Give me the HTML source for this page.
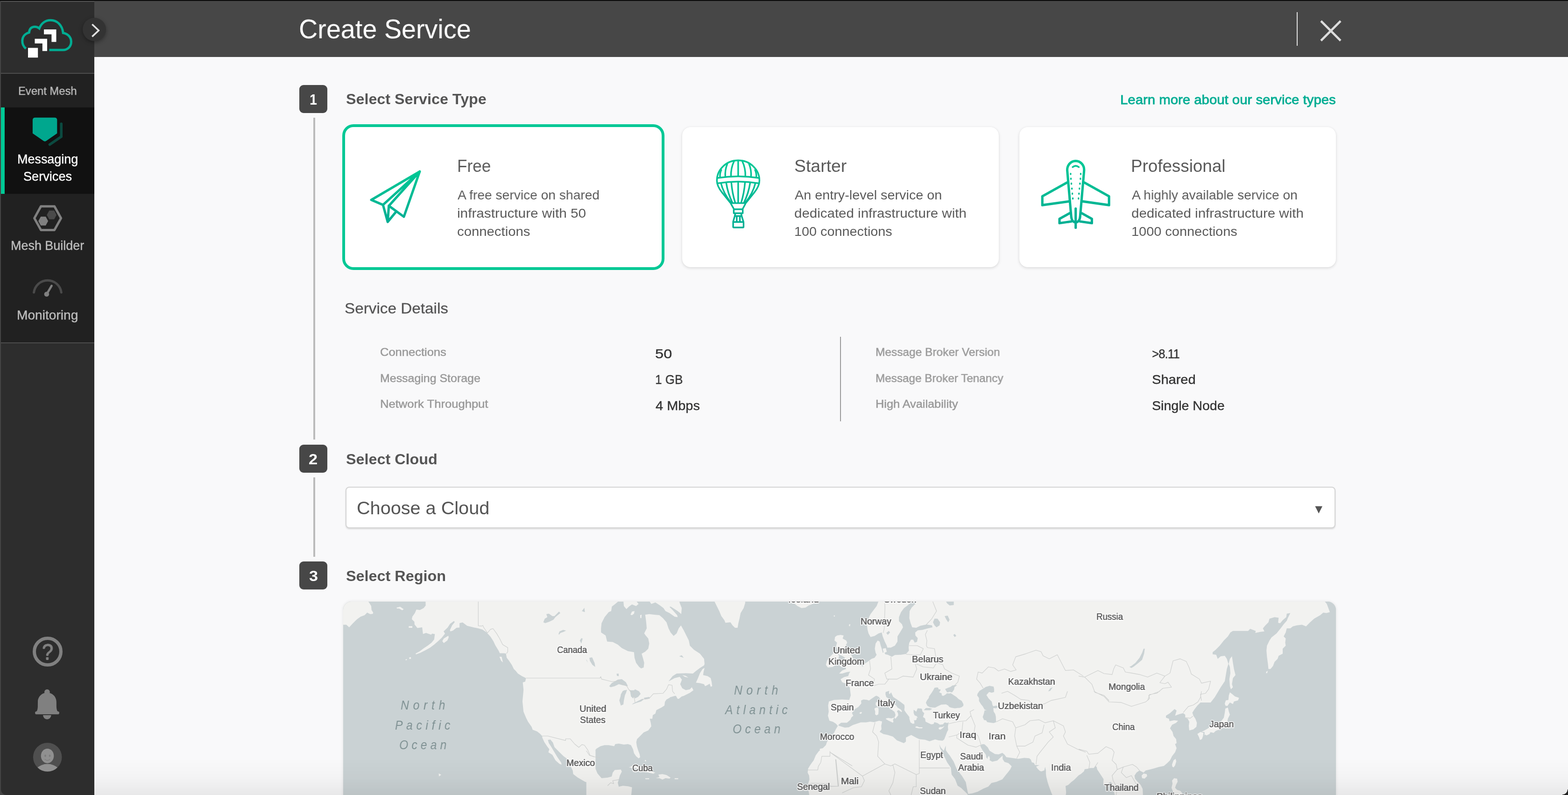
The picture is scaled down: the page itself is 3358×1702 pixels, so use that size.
<!DOCTYPE html>
<html lang="en">
<head>
<meta charset="utf-8">
<title>Create Service</title>
<style>
*{box-sizing:border-box;margin:0;padding:0}
html,body{width:3358px;height:1702px;overflow:hidden;background:#f9f9fa}
body{font-family:"Liberation Sans",sans-serif;position:relative}
#app{position:absolute;left:0;top:0;width:3358px;height:1702px;overflow:hidden;background:#f9f9fa}
.a{position:absolute}
.t{position:absolute;white-space:nowrap;line-height:1;will-change:transform;transform-origin:0 0}
svg{position:absolute;overflow:visible}
.badge{position:absolute;width:60px;height:60px;border-radius:9px;background:#474747}
.card{position:absolute;top:272px;width:678px;height:300px;background:#fff;border-radius:18px;box-shadow:0 2px 6px rgba(0,0,0,.13),0 0 2px rgba(0,0,0,.06)}
.card.sel{box-shadow:0 0 0 6px #00c895}
.ml{color:#626262;transform-origin:0 0;text-shadow:0.35px 0 0 #626262,-0.35px 0 0 #626262,0 0 2px #fff,0 0 2px #fff,0 0 3px #fff,0 0 3px #fff,1.5px 1.5px 1px #fff,-1.5px -1.5px 1px #fff,1.5px -1.5px 1px #fff,-1.5px 1.5px 1px #fff}
.mo{color:#7f9193;font-style:italic;transform-origin:0 0}
.vline{position:absolute;left:671px;width:4px;background:#bbb}
</style>
</head>
<body>
<div id="app">
<div class="a" style="left:0;top:0;width:202px;height:1702px;background:#444"></div>
<header class="a" style="left:202px;top:2px;width:3156px;height:120px;background:#474747"></header>
<nav class="a" style="left:2px;top:2px;width:200px;height:1700px;background:#2d2d2d;border-bottom-left-radius:12px;overflow:hidden">
<div class="a" style="left:0;top:0;width:200px;height:2px;background:#555"></div>
<div class="a" style="left:0;top:154px;width:200px;height:2px;background:#4d4d4d"></div>
<div class="a" style="left:0;top:156px;width:200px;height:575px;background:#212121"></div>
<div class="a" style="left:0;top:228px;width:200px;height:185px;background:#111"></div>
<div class="a" style="left:0;top:228px;width:8px;height:185px;background:#00c895"></div>
<div class="a" style="left:0;top:731px;width:200px;height:2px;background:#4d4d4d"></div>
</nav>
<div class="a" style="left:0;top:0;width:3358px;height:2px;background:#0a0a0a"></div>
<svg style="left:0;top:0" width="210" height="140" viewBox="0 0 210 140">
<path d="M55.5 104 C48 98 47.5 91 47.8 86 C48.5 77 55 71.5 62.3 69.6 C63 61 68 57.2 74.5 57.2 C78.5 57.2 81.5 58.5 84.2 60.8 C88.5 50 97 43.3 108.3 43.3 C122.5 43.3 133.5 54 135.2 70.5 C145 72 152.4 79.5 152.4 89.5 C152.4 99.5 145 107 135 107 L105.5 107" fill="none" stroke="#00ad93" stroke-width="5"/>
<rect x="60" y="102.5" width="21.2" height="20.8" fill="#fff"/>
<path d="M74.5 83 H101 V109.3 H90.8 V93 H74.5 Z" fill="#fff"/>
<path d="M94.1 63.1 H120.5 V89.7 H110.4 V73.4 H94.1 Z" fill="#fff"/>
</svg>
<div class="a" style="left:177px;top:38px;width:50px;height:50px;border-radius:50%;background:#333;box-shadow:0 3px 8px rgba(0,0,0,.35)"></div>
<svg style="left:177px;top:38px" width="50" height="50" viewBox="177 38 50 50"><path d="M197.3 52 L211.3 65.2 L197.3 78.4" fill="none" stroke="#e2e2e2" stroke-width="3.6"/></svg>
<div class="t " style="left:38.85px;top:182.50px;font-size:24.56px;color:#bdbdbd;transform:scaleX(0.9691);-webkit-text-stroke:0.4px #bdbdbd;">Event Mesh</div>
<div class="t " style="left:36.79px;top:328.16px;font-size:26.74px;color:#fafafa;transform:scaleX(1.0078);-webkit-text-stroke:0.4px #fafafa;">Messaging</div>
<div class="t " style="left:49.97px;top:364.56px;font-size:26.74px;color:#fafafa;transform:scaleX(1.0153);-webkit-text-stroke:0.4px #fafafa;">Services</div>
<div class="t " style="left:23.19px;top:513.26px;font-size:26.74px;color:#bdbdbd;transform:scaleX(1.0076);-webkit-text-stroke:0.4px #bdbdbd;">Mesh Builder</div>
<div class="t " style="left:35.89px;top:662.36px;font-size:26.74px;color:#bdbdbd;transform:scaleX(1.0517);-webkit-text-stroke:0.4px #bdbdbd;">Monitoring</div>
<svg style="left:0;top:240px" width="202" height="80" viewBox="0 240 202 80">
<path d="M131.2 265 V292.5 L106.5 309.5" fill="none" stroke="#0b4a40" stroke-width="5.6" stroke-linecap="round" stroke-linejoin="miter"/>
<path d="M75.4 251.7 H116.8 Q122.3 251.7 122.3 257.2 V285.5 L99.2 301.6 Q96.1 303.7 93 301.6 L69.9 285.5 V257.2 Q69.9 251.7 75.4 251.7 Z" fill="#00a78e"/>
</svg>
<svg style="left:0;top:430px" width="202" height="80" viewBox="0 430 202 80">
<path d="M73.6 467.1 L87.6 441.8 H116.6 L130.7 467.1 L116.6 492.4 H87.6 Z" fill="none" stroke="#808080" stroke-width="5" stroke-linejoin="round"/>
<path d="M82.1 473.2 L87.3 463.7 H97.9 L103.1 473.2 L97.9 482.8 H87.3 Z" fill="#808080"/>
<path d="M100.2 460.2 L105.4 450.8 H116 L121.1 460.2 L116 469.5 H105.4 Z" fill="#4a4a4a"/>
</svg>
<svg style="left:0;top:590px" width="202" height="60" viewBox="0 590 202 60">
<path d="M72.6 626 A29.6 29.6 0 0 1 131.3 626" fill="none" stroke="#4a4a4a" stroke-width="5" stroke-linecap="round"/>
<path d="M100 629.6 L110.6 611.8" fill="none" stroke="#808080" stroke-width="4.6" stroke-linecap="round"/>
<circle cx="99.9" cy="629.8" r="5.3" fill="#808080"/>
</svg>
<div class="a" style="left:69.9px;top:1363px;width:64px;height:64px;border-radius:50%;border:7px solid #808080"></div>
<div class="t " style="left:90.43px;top:1371.59px;font-size:47.97px;color:#808080;transform:scaleX(0.9000);text-shadow:0.7px 0 0 #808080,-0.7px 0 0 #808080,0 0.5px 0 #808080;">?</div>
<svg style="left:0;top:1470px" width="202" height="80" viewBox="0 1470 202 80">
<circle cx="100.9" cy="1481.7" r="5.9" fill="#808080"/>
<path d="M76.6 1524.5 C79.3 1523 80.6 1519.5 80.9 1513 L81 1502.5 C81 1491.5 89.5 1482.9 100.9 1482.9 C112.3 1482.9 120.8 1491.5 120.8 1502.5 L120.9 1513 C121.2 1519.5 122.5 1523 125.4 1524.5 Z" fill="#808080"/>
<rect x="75.1" y="1523" width="51.8" height="6.3" rx="3.1" fill="#808080"/>
<path d="M92.1 1531 H109.6 A8.75 8.9 0 0 1 92.1 1531 Z" fill="#808080"/>
</svg>
<svg style="left:0;top:1580px" width="202" height="80" viewBox="0 1580 202 80">
<defs><clipPath id="avc"><circle cx="101.7" cy="1621" r="30.8"/></clipPath></defs>
<circle cx="101.7" cy="1621" r="30.8" fill="#4f4f4f"/>
<g clip-path="url(#avc)"><ellipse cx="101.7" cy="1667" rx="33" ry="31.5" fill="#909090"/></g>
<ellipse cx="101.5" cy="1618.3" rx="13.8" ry="15.6" fill="#909090"/>
<ellipse cx="97" cy="1618" rx="1.9" ry="2.4" fill="#7c7c7c"/>
<ellipse cx="106.6" cy="1618" rx="1.9" ry="2.4" fill="#7c7c7c"/>
<path d="M96 1625.5 Q101.4 1630.5 107 1625.5" fill="none" stroke="#7c7c7c" stroke-width="1.3" stroke-linecap="round"/>
</svg>
<div class="t " style="left:640.27px;top:34.63px;font-size:56.54px;color:#ffffff;transform:scaleX(0.9860);">Create Service</div>
<div class="a" style="left:2777px;top:26px;width:2px;height:72px;background:#e0e0e0"></div>
<svg style="left:2820px;top:36px" width="60" height="60" viewBox="2820 36 60 60"><path d="M2829 45 L2871 87 M2871 45 L2829 87" fill="none" stroke="#dcdcdc" stroke-width="4.6"/></svg>
<div class="vline" style="top:252px;height:689px"></div>
<div class="vline" style="top:1022px;height:170px"></div>
<div class="badge" style="left:641px;top:182px"></div>
<div class="badge" style="left:641px;top:952px"></div>
<div class="badge" style="left:641px;top:1202px"></div>
<div class="t " style="left:663.20px;top:198.47px;font-size:31.69px;color:#fff;transform:scaleX(0.9000);font-weight:bold;">1</div>
<div class="t " style="left:661.31px;top:968.47px;font-size:31.69px;color:#fff;transform:scaleX(1.0816);font-weight:bold;">2</div>
<div class="t " style="left:661.72px;top:1218.47px;font-size:31.69px;color:#fff;transform:scaleX(1.0794);font-weight:bold;">3</div>
<div class="t " style="left:740.97px;top:196.48px;font-size:32.27px;color:#555;transform:scaleX(1.0000);font-weight:bold;">Select Service Type</div>
<div class="t " style="left:740.67px;top:966.58px;font-size:32.27px;color:#555;transform:scaleX(1.0017);font-weight:bold;">Select Cloud</div>
<div class="t " style="left:740.67px;top:1216.78px;font-size:32.27px;color:#555;transform:scaleX(1.0026);font-weight:bold;">Select Region</div>
<div class="t " style="left:2399.19px;top:198.83px;font-size:28.20px;color:#00ad93;transform:scaleX(1.0413);-webkit-text-stroke:0.8px #00ad93;">Learn more about our service types</div>
<div class="card sel" style="left:739px;border-radius:18px"></div>
<div class="card" style="left:1461px"></div>
<div class="card" style="left:2183px"></div>
<div class="t " style="left:978.52px;top:337.76px;font-size:36.77px;color:#5a5a5a;transform:scaleX(0.9540);">Free</div>
<div class="t " style="left:980.04px;top:403.08px;font-size:28.49px;color:#5a5a5a;transform:scaleX(0.9896);">A free service on shared</div>
<div class="t " style="left:978.51px;top:441.88px;font-size:28.49px;color:#5a5a5a;transform:scaleX(1.0444);">infrastructure with 50</div>
<div class="t " style="left:978.86px;top:480.98px;font-size:28.49px;color:#5a5a5a;transform:scaleX(1.0287);">connections</div>
<div class="t " style="left:1700.80px;top:337.76px;font-size:36.77px;color:#5a5a5a;transform:scaleX(1.0178);">Starter</div>
<div class="t " style="left:1701.94px;top:403.08px;font-size:28.49px;color:#5a5a5a;transform:scaleX(1.0112);">An entry-level service on</div>
<div class="t " style="left:1701.06px;top:441.88px;font-size:28.49px;color:#5a5a5a;transform:scaleX(1.0353);">dedicated infrastructure with</div>
<div class="t " style="left:1700.81px;top:480.98px;font-size:28.49px;color:#5a5a5a;transform:scaleX(1.0108);">100 connections</div>
<div class="t " style="left:2421.79px;top:337.76px;font-size:36.77px;color:#5a5a5a;transform:scaleX(0.9991);">Professional</div>
<div class="t " style="left:2423.94px;top:403.08px;font-size:28.49px;color:#5a5a5a;transform:scaleX(0.9914);">A highly available service on</div>
<div class="t " style="left:2423.06px;top:441.88px;font-size:28.49px;color:#5a5a5a;transform:scaleX(1.0353);">dedicated infrastructure with</div>
<div class="t " style="left:2422.80px;top:480.98px;font-size:28.49px;color:#5a5a5a;transform:scaleX(1.0153);">1000 connections</div>
<svg style="left:770px;top:340px" width="160" height="160" viewBox="0 0 1306 1306"><defs><linearGradient id="g1" gradientUnits="userSpaceOnUse" x1="0" y1="200" x2="0" y2="1120"><stop offset="0" stop-color="#00c895"/><stop offset="1" stop-color="#00ad93"/></linearGradient></defs><g fill="none" stroke="url(#g1)" stroke-width="42" stroke-linejoin="round" stroke-linecap="round"><path d="M1052 222 L205 718 L410 805 L1052 222 L775 1012 L512 822 L1052 222"/><path d="M410 805 L492 1102 L512 822 M492 1102 L628 938"/></g></svg>
<svg style="left:1500px;top:335px" width="160" height="160" viewBox="0 0 1306 1306"><defs><linearGradient id="g2" gradientUnits="userSpaceOnUse" x1="0" y1="60" x2="0" y2="1250"><stop offset="0" stop-color="#00c895"/><stop offset="1" stop-color="#00ad93"/></linearGradient></defs><g fill="none" stroke="url(#g2)" stroke-width="28" stroke-linejoin="round" stroke-linecap="round"><path d="M528 815 L375 625 C320 555 288 490 288 420 C288 225 455 68 660 68 C865 68 1032 225 1032 420 C1032 490 1000 555 945 625 L792 815 Z"/><path d="M296 376 Q660 318 1024 376 M300 468 Q660 410 1020 468"/><path d="M660 70 V345 M590 80 Q530 200 534 350 M470 130 Q425 240 436 358 M365 235 Q335 300 344 368 M730 80 Q790 200 786 350 M850 130 Q895 240 884 358 M955 235 Q985 300 976 368"/><path d="M660 442 V810 M540 448 Q555 640 608 808 M450 456 Q480 650 560 808 M360 468 Q400 640 535 808 M780 448 Q765 640 712 808 M870 456 Q840 650 760 808 M960 468 Q920 640 785 808"/><path d="M535 830 L585 918 M785 830 L738 918 M583 922 H740 V992 H583 Z M612 992 L600 1040 H722 L710 992 M600 1042 L572 1140 M722 1042 L752 1140 M635 1050 V1140 M690 1050 V1140"/><rect x="572" y="1145" width="182" height="96" rx="12"/></g></svg>
<svg style="left:2220px;top:335px" width="170" height="160" viewBox="0 0 1388 1306"><defs><linearGradient id="g3" gradientUnits="userSpaceOnUse" x1="0" y1="60" x2="0" y2="1260"><stop offset="0" stop-color="#00c895"/><stop offset="1" stop-color="#00ad93"/></linearGradient></defs><g fill="none" stroke="url(#g3)" stroke-width="42" stroke-linejoin="round" stroke-linecap="round"><path d="M683 1150 C640 1150 612 1110 606 1060 L536 250 C528 155 595 78 683 78 C771 78 838 155 830 250 L760 1060 C754 1110 726 1150 683 1150 Z"/><path d="M532 455 L100 695 V850 L562 785 M834 455 L1266 695 V850 L804 785"/><path d="M580 990 L400 1090 V1165 L612 1135 M786 990 L966 1090 V1165 L754 1135"/><path d="M683 910 V1245"/><path d="M630 185 Q683 145 738 185" stroke-width="30"/></g><g fill="url(#g3)"><ellipse cx="595" cy="305" rx="14" ry="20"/><ellipse cx="771" cy="305" rx="14" ry="20"/><ellipse cx="600" cy="390" rx="14" ry="20"/><ellipse cx="766" cy="390" rx="14" ry="20"/><ellipse cx="608" cy="475" rx="14" ry="20"/><ellipse cx="758" cy="475" rx="14" ry="20"/><ellipse cx="617" cy="562" rx="14" ry="20"/><ellipse cx="749" cy="562" rx="14" ry="20"/><ellipse cx="625" cy="650" rx="14" ry="20"/><ellipse cx="741" cy="650" rx="14" ry="20"/><ellipse cx="633" cy="735" rx="14" ry="20"/><ellipse cx="733" cy="735" rx="14" ry="20"/></g></svg>
<div class="t " style="left:737.99px;top:643.73px;font-size:31.98px;color:#555;transform:scaleX(1.0411);-webkit-text-stroke:0.3px #555;">Service Details</div>
<div class="t " style="left:814.30px;top:742.38px;font-size:24.71px;color:#9a9a9a;transform:scaleX(1.0324);-webkit-text-stroke:0.55px #9a9a9a;">Connections</div>
<div class="t " style="left:813.55px;top:797.68px;font-size:24.71px;color:#9a9a9a;transform:scaleX(1.0092);-webkit-text-stroke:0.55px #9a9a9a;">Messaging Storage</div>
<div class="t " style="left:813.50px;top:853.38px;font-size:24.71px;color:#9a9a9a;transform:scaleX(1.0363);-webkit-text-stroke:0.55px #9a9a9a;">Network Throughput</div>
<div class="t " style="left:1403.30px;top:742.58px;font-size:28.49px;color:#333;transform:scaleX(1.1400);letter-spacing:0.21px;-webkit-text-stroke:0.4px #333;">50</div>
<div class="t " style="left:1402.62px;top:798.38px;font-size:28.49px;color:#333;transform:scaleX(0.9127);-webkit-text-stroke:0.4px #333;">1 GB</div>
<div class="t " style="left:1403.94px;top:853.88px;font-size:28.49px;color:#333;transform:scaleX(1.0159);-webkit-text-stroke:0.4px #333;">4 Mbps</div>
<div class="a" style="left:1799px;top:721px;width:2px;height:181px;background:#9a9a9a"></div>
<div class="t " style="left:1875.09px;top:742.38px;font-size:24.71px;color:#9a9a9a;transform:scaleX(0.9902);-webkit-text-stroke:0.55px #9a9a9a;">Message Broker Version</div>
<div class="t " style="left:1875.11px;top:797.68px;font-size:24.71px;color:#9a9a9a;transform:scaleX(0.9830);-webkit-text-stroke:0.55px #9a9a9a;">Message Broker Tenancy</div>
<div class="t " style="left:1875.02px;top:853.38px;font-size:24.71px;color:#9a9a9a;transform:scaleX(1.0242);-webkit-text-stroke:0.55px #9a9a9a;">High Availability</div>
<div class="t " style="left:2466.64px;top:742.58px;font-size:28.49px;color:#333;transform:scaleX(0.9000);letter-spacing:-0.93px;-webkit-text-stroke:0.4px #333;">&gt;8.11</div>
<div class="t " style="left:2466.58px;top:798.38px;font-size:28.49px;color:#333;transform:scaleX(1.0199);-webkit-text-stroke:0.4px #333;">Shared</div>
<div class="t " style="left:2466.60px;top:853.88px;font-size:28.49px;color:#333;transform:scaleX(1.0029);-webkit-text-stroke:0.4px #333;">Single Node</div>
<div class="a" style="left:740px;top:1042px;width:2120px;height:89px;background:#fff;border:2px solid #d4d4d4;border-radius:8px;box-shadow:0 2px 3px rgba(0,0,0,.12)"></div>
<div class="t " style="left:763.79px;top:1068.13px;font-size:39.53px;color:#555;transform:scaleX(1.0030);">Choose a Cloud</div>
<svg style="left:2810px;top:1078px" width="30" height="30" viewBox="2810 1078 30 30"><path d="M2816.4 1083.8 H2832 L2824.2 1099.2 Z" fill="#555"/></svg>
<div class="a" style="left:735px;top:1288px;width:2126px;height:430px;border-radius:18px;overflow:hidden;background:#cbd3d5;box-shadow:0 0 6px rgba(0,0,0,.10)"><svg style="left:0;top:0" width="2126" height="430" viewBox="735 1288 2126 430">
<rect x="735" y="1288" width="2126" height="430" fill="#cad2d4"/>
<path fill="#f2f2f0" d="M733.0 1286.5 L787.8 1286.5 L791.7 1292.0 L795.0 1297.4 L795.7 1306.1 L799.3 1311.5 L798.3 1314.3 L792.8 1314.8 L786.3 1311.5 L780.9 1317.0 L772.2 1320.2 L764.6 1325.7 L755.9 1334.3 L747.8 1343.0 L741.7 1337.6 L733.0 1337.6 Z M1285.2 1286.5 L1285.2 1501.7 L1121.1 1501.7 L1121.1 1475.7 L1119.6 1460.9 L1124.8 1459.3 L1126.5 1451.7 L1117.8 1447.4 L1109.1 1442.0 L1104.8 1436.5 L1100.4 1432.2 L1096.1 1423.5 L1089.6 1413.7 L1085.2 1408.3 L1083.5 1399.1 L1078.7 1398.5 L1070.4 1398.5 L1067.8 1393.0 L1060.9 1381.7 L1056.5 1372.4 L1050.4 1363.0 L1041.7 1353.5 L1033.0 1347.8 L1024.3 1345.2 L1013.5 1343.0 L1000.4 1339.8 L990.7 1332.6 L984.1 1333.9 L984.1 1343.5 L977.6 1344.1 L970.0 1350.0 L964.6 1351.7 L963.5 1349.1 L968.3 1338.7 L973.9 1331.7 L972.2 1329.6 L963.9 1335.4 L958.7 1343.5 L950.0 1351.7 L953.0 1356.5 L946.1 1365.2 L938.5 1372.4 L929.8 1380.0 L921.1 1386.5 L911.3 1392.0 L900.4 1397.4 L890.7 1400.9 L890.2 1399.1 L898.3 1394.8 L907.0 1388.3 L916.7 1381.7 L924.3 1375.7 L929.8 1369.1 L931.3 1357.4 L925.4 1356.5 L923.3 1358.7 L912.4 1355.0 L905.9 1357.2 L904.1 1343.0 L893.9 1344.6 L887.8 1337.0 L887.4 1331.1 L882.0 1325.7 L883.0 1320.2 L888.5 1312.6 L891.7 1305.0 L899.3 1306.1 L907.4 1301.7 L911.7 1296.3 L911.3 1286.5 Z M947.2 1372.4 L950.4 1367.0 L960.2 1360.9 L960.9 1364.8 L958.0 1371.3 L950.4 1376.7 Z M849.3 1300.7 L857.0 1299.1 L864.6 1304.3 L861.3 1306.5 L854.8 1302.8 L850.0 1302.8 Z M875.4 1340.4 L883.0 1340.4 L883.0 1344.1 L875.4 1344.1 Z M876.1 1407.8 L879.8 1406.7 L880.4 1410.0 L877.0 1410.9 Z M868.5 1411.7 L871.3 1411.1 L871.5 1413.0 L868.7 1413.5 Z M1069.6 1406.1 L1074.3 1406.1 L1077.0 1418.0 L1073.3 1414.8 Z M1275.4 1477.8 L1275.4 1681.1 L1267.8 1678.9 L1252.6 1673.5 L1237.4 1664.8 L1227.6 1657.2 L1226.5 1649.6 L1220.0 1636.5 L1214.6 1624.6 L1207.0 1619.1 L1198.3 1610.4 L1187.4 1599.6 L1184.1 1589.8 L1178.7 1583.3 L1173.3 1583.9 L1161.3 1576.1 L1157.0 1571.3 L1150.4 1565.9 L1140.7 1562.2 L1138.5 1556.1 L1130.9 1545.2 L1126.5 1536.5 L1121.1 1523.5 L1118.9 1501.7 L1121.1 1477.8 Z M1173.3 1583.9 L1175.4 1590.9 L1180.9 1599.6 L1187.4 1610.4 L1193.9 1621.3 L1201.5 1632.2 L1203.0 1637.0 L1198.3 1635.4 L1189.6 1627.8 L1183.0 1615.9 L1174.3 1610.4 L1176.5 1603.9 L1172.2 1598.5 L1165.7 1588.7 L1161.3 1578.9 L1161.3 1576.1 Z M939.6 1655.7 L945.0 1658.7 L940.0 1662.2 Z M1255.7 1286.5 L1325.2 1286.5 L1317.0 1293.5 L1310.4 1298.5 L1308.9 1308.3 L1303.5 1310.4 L1294.8 1321.3 L1288.3 1334.3 L1287.2 1345.2 L1287.2 1353.9 L1297.0 1360.4 L1300.2 1373.5 L1312.2 1374.6 L1323.0 1380.0 L1331.7 1387.6 L1344.8 1394.1 L1357.8 1396.3 L1358.9 1408.3 L1362.2 1419.1 L1368.7 1427.8 L1373.0 1431.1 L1378.5 1428.9 L1379.6 1419.1 L1377.4 1410.4 L1374.1 1399.6 L1381.7 1395.2 L1388.3 1388.7 L1390.4 1377.8 L1388.3 1367.0 L1382.8 1360.4 L1379.6 1356.1 L1385.0 1345.2 L1383.9 1332.2 L1382.8 1323.5 L1381.7 1315.9 L1390.4 1314.8 L1401.3 1315.9 L1412.2 1317.0 L1419.8 1323.5 L1427.4 1332.2 L1431.7 1345.2 L1436.1 1353.9 L1442.6 1361.5 L1449.1 1356.1 L1453.5 1345.2 L1458.3 1339.1 L1464.3 1349.6 L1469.8 1360.4 L1475.2 1371.3 L1477.4 1382.2 L1486.1 1390.9 L1499.1 1399.6 L1507.8 1410.4 L1508.9 1421.3 L1507.8 1424.6 L1499.1 1430.0 L1490.4 1436.5 L1483.9 1442.0 L1468.7 1441.3 L1449.1 1442.0 L1440.4 1447.4 L1431.7 1458.7 L1444.8 1451.7 L1455.7 1449.1 L1460.4 1455.0 L1456.7 1464.8 L1461.1 1473.5 L1468.7 1477.4 L1477.4 1475.7 L1481.7 1471.3 L1485.0 1477.8 L1477.4 1483.3 L1464.3 1489.8 L1455.7 1492.6 L1451.3 1496.3 L1447.0 1488.7 L1442.6 1486.5 L1433.9 1494.1 L1427.4 1497.4 L1423.0 1503.9 L1255.7 1503.9 Z M1490.4 1461.5 L1494.8 1451.7 L1499.1 1440.9 L1504.6 1432.2 L1508.9 1430.0 L1506.7 1438.7 L1505.7 1445.2 L1515.4 1447.4 L1522.0 1451.7 L1524.1 1460.4 L1525.2 1469.1 L1522.0 1470.2 L1519.8 1463.7 L1514.3 1467.0 L1510.0 1469.1 L1507.8 1464.8 L1499.1 1462.6 Z M1461.1 1445.2 L1468.7 1447.0 L1474.1 1450.7 L1466.5 1449.1 Z M1454.6 1286.5 L1455.7 1290.9 L1460.0 1301.7 L1458.9 1314.8 L1456.7 1312.6 L1451.3 1308.3 L1444.8 1303.9 L1436.1 1298.5 L1433.9 1299.6 L1440.4 1306.1 L1450.2 1317.0 L1451.3 1321.3 L1444.8 1320.2 L1433.9 1312.6 L1425.2 1308.3 L1420.9 1301.7 L1412.2 1295.2 L1403.5 1289.8 L1394.8 1293.0 L1390.4 1286.5 Z M1362.2 1286.5 L1367.6 1293.0 L1362.2 1297.4 L1353.5 1294.1 L1347.0 1298.5 L1341.5 1303.9 L1336.1 1297.4 L1335.0 1286.5 Z M1350.2 1315.9 L1353.5 1309.3 L1358.9 1308.3 L1357.8 1313.7 L1353.5 1317.0 Z M1370.9 1317.0 L1374.1 1315.9 L1373.5 1323.5 L1371.3 1323.0 Z M1595.9 1286.5 L1595.9 1290.9 L1592.6 1301.7 L1586.1 1312.6 L1583.9 1323.5 L1581.3 1334.3 L1579.6 1344.1 L1574.1 1344.1 L1568.7 1338.7 L1564.3 1332.2 L1553.5 1333.3 L1551.3 1327.8 L1544.8 1319.1 L1540.4 1308.3 L1535.0 1297.4 L1529.6 1286.5 Z M1752.4 1286.5 L1751.3 1289.8 L1740.4 1293.0 L1731.7 1296.3 L1725.2 1300.7 L1716.5 1301.7 L1707.8 1297.4 L1701.3 1292.0 L1694.8 1290.9 L1689.3 1286.5 Z M1479.6 1477.8 L1468.7 1486.5 L1460.0 1490.9 L1453.5 1496.3 L1451.3 1493.0 L1449.1 1488.7 L1433.9 1493.0 L1427.4 1497.4 L1424.1 1501.7 L1423.0 1510.4 L1416.5 1514.8 L1405.7 1520.2 L1403.5 1527.8 L1398.0 1531.1 L1397.0 1538.7 L1391.5 1538.7 L1393.7 1547.4 L1394.8 1555.0 L1388.3 1563.7 L1378.5 1568.0 L1370.9 1575.7 L1364.3 1582.2 L1362.6 1588.7 L1363.9 1597.4 L1366.5 1606.1 L1369.8 1614.8 L1370.9 1621.3 L1367.6 1623.5 L1362.2 1619.1 L1357.8 1612.6 L1355.7 1603.9 L1351.3 1595.2 L1344.8 1593.0 L1336.1 1594.1 L1325.2 1592.0 L1317.6 1593.0 L1315.4 1597.4 L1303.5 1595.2 L1294.8 1595.2 L1286.1 1597.4 L1277.4 1602.8 L1273.0 1608.3 L1272.0 1619.1 L1273.0 1627.8 L1274.1 1636.5 L1275.2 1645.2 L1279.6 1656.1 L1288.3 1665.9 L1301.3 1664.8 L1310.0 1662.6 L1312.2 1653.9 L1316.5 1648.5 L1329.6 1647.4 L1331.7 1651.7 L1327.4 1660.4 L1325.2 1669.1 L1323.0 1675.7 L1325.2 1684.3 L1333.9 1682.2 L1344.8 1683.3 L1353.5 1685.4 L1352.4 1697.4 L1351.3 1706.1 L1255.7 1706.1 L1255.7 1477.8 Z M1347.0 1643.0 L1355.7 1638.7 L1368.7 1639.8 L1381.7 1645.2 L1392.6 1650.7 L1403.5 1653.9 L1399.1 1656.5 L1388.3 1653.9 L1377.4 1651.7 L1364.3 1645.2 L1353.5 1644.1 Z M1410.0 1658.3 L1418.7 1657.2 L1427.4 1659.3 L1436.1 1664.8 L1433.9 1667.0 L1425.2 1665.9 L1418.7 1669.1 L1412.2 1665.9 L1404.6 1665.9 L1412.2 1663.7 Z M1381.7 1666.3 L1390.0 1665.9 L1390.4 1668.3 L1382.2 1668.3 Z M1444.8 1666.1 L1452.4 1665.9 L1452.4 1668.3 L1444.8 1668.3 Z M1380.9 1627.0 L1383.0 1627.0 L1383.9 1630.0 L1381.7 1630.0 Z M1774.1 1510.4 L1777.4 1501.7 L1783.9 1497.4 L1792.6 1496.3 L1807.8 1497.4 L1825.2 1498.5 L1825.2 1547.4 L1803.5 1548.5 L1793.7 1552.8 L1790.4 1549.6 L1783.9 1545.2 L1776.3 1543.0 L1773.0 1532.2 L1775.2 1523.5 Z M1825.2 1706.1 L1733.9 1706.1 L1731.7 1694.1 L1728.5 1685.4 L1730.7 1677.8 L1733.5 1669.1 L1732.8 1660.4 L1729.6 1653.9 L1730.7 1645.2 L1736.1 1636.5 L1742.6 1627.8 L1747.0 1617.0 L1753.5 1608.3 L1762.2 1601.7 L1768.7 1595.2 L1770.9 1588.7 L1779.6 1575.7 L1786.1 1569.1 L1790.4 1560.4 L1794.8 1556.1 L1803.5 1558.3 L1825.2 1559.3 Z M2325.2 1286.5 L2325.2 1503.9 L1817.6 1503.9 L1818.7 1488.7 L1819.8 1480.0 L1818.7 1471.3 L1814.3 1464.8 L1803.5 1460.4 L1800.2 1453.9 L1807.8 1449.6 L1816.5 1447.4 L1818.7 1440.9 L1823.0 1435.4 L1831.7 1436.5 L1840.4 1433.3 L1847.0 1427.8 L1851.3 1421.3 L1857.8 1417.0 L1866.5 1410.4 L1873.0 1408.3 L1877.4 1401.7 L1875.2 1397.4 L1873.5 1388.7 L1875.2 1377.8 L1879.6 1371.3 L1883.9 1373.5 L1886.1 1382.2 L1888.3 1388.7 L1890.4 1397.4 L1893.7 1395.2 L1895.9 1400.7 L1901.3 1401.7 L1910.0 1406.1 L1916.5 1402.2 L1929.6 1401.7 L1940.4 1400.0 L1946.5 1393.0 L1945.9 1386.5 L1947.0 1376.7 L1950.9 1369.6 L1955.7 1369.6 L1958.9 1375.7 L1963.9 1373.9 L1965.4 1365.9 L1960.4 1360.4 L1960.0 1353.9 L1965.4 1349.6 L1975.2 1348.5 L1987.2 1345.2 L1997.0 1343.0 L1995.9 1338.7 L1983.9 1337.0 L1970.9 1339.8 L1962.2 1344.1 L1953.5 1343.0 L1950.2 1334.3 L1947.4 1323.5 L1948.0 1308.3 L1952.4 1300.7 L1960.0 1293.0 L1963.3 1286.5 Z M1953.5 1286.5 L1944.8 1295.2 L1936.1 1301.7 L1929.6 1310.4 L1925.2 1321.3 L1925.2 1330.0 L1931.7 1336.5 L1933.9 1343.0 L1927.4 1353.9 L1922.0 1362.6 L1922.0 1373.5 L1916.5 1382.2 L1907.8 1386.5 L1900.2 1386.5 L1899.1 1382.2 L1894.8 1373.5 L1890.4 1362.6 L1888.3 1353.9 L1881.7 1356.1 L1873.0 1361.5 L1864.3 1363.7 L1860.0 1356.1 L1857.8 1347.4 L1856.7 1336.5 L1860.0 1323.5 L1864.3 1314.8 L1870.9 1306.1 L1877.4 1297.4 L1881.7 1286.5 Z M1890.4 1388.7 L1897.0 1387.6 L1899.1 1395.2 L1892.6 1398.5 Z M1788.3 1363.7 L1792.6 1360.4 L1800.2 1359.3 L1806.7 1360.4 L1804.6 1367.0 L1812.2 1371.3 L1814.3 1375.7 L1811.1 1382.2 L1807.8 1386.5 L1816.5 1393.0 L1823.0 1401.7 L1827.4 1410.4 L1835.0 1414.8 L1838.3 1423.5 L1847.0 1425.7 L1845.9 1432.2 L1836.1 1436.5 L1825.2 1437.6 L1814.3 1438.7 L1803.5 1442.0 L1797.0 1442.0 L1803.5 1435.4 L1812.2 1432.2 L1810.0 1427.8 L1801.3 1427.8 L1797.0 1423.5 L1803.5 1419.1 L1805.7 1412.6 L1810.0 1408.3 L1803.5 1403.9 L1797.0 1401.7 L1794.8 1393.0 L1790.4 1384.3 L1792.6 1375.7 L1787.2 1371.3 Z M1768.7 1423.5 L1770.9 1414.8 L1777.4 1406.1 L1783.9 1399.6 L1792.6 1398.5 L1797.0 1403.9 L1794.8 1412.6 L1792.6 1421.3 L1783.9 1427.8 L1773.0 1428.9 Z M1785.7 1317.4 L1787.8 1317.4 L1787.8 1320.0 L1785.7 1320.0 Z M1818.3 1337.0 L1820.9 1336.1 L1820.4 1340.4 L1818.3 1340.4 Z M1755.7 1477.8 L2325.2 1477.8 L2325.2 1706.1 L1755.7 1706.1 Z M2305.7 1286.5 L2836.1 1286.5 L2841.5 1293.0 L2844.8 1301.7 L2848.0 1310.4 L2840.4 1312.6 L2833.9 1311.5 L2827.4 1317.0 L2814.3 1324.6 L2805.7 1332.2 L2797.0 1340.9 L2788.3 1337.6 L2777.4 1338.7 L2768.7 1340.9 L2763.3 1345.2 L2755.7 1345.2 L2753.5 1353.9 L2749.1 1362.6 L2753.5 1367.0 L2752.4 1375.7 L2753.5 1382.2 L2747.0 1388.7 L2747.0 1399.6 L2738.3 1403.9 L2736.1 1410.4 L2729.6 1417.0 L2726.3 1425.7 L2720.9 1432.2 L2716.5 1432.2 L2715.4 1421.3 L2713.3 1406.1 L2712.2 1393.0 L2713.3 1382.2 L2718.7 1371.3 L2723.0 1364.8 L2733.9 1356.1 L2742.6 1345.2 L2749.1 1336.5 L2755.7 1328.9 L2757.8 1323.5 L2763.3 1312.6 L2755.7 1313.7 L2754.6 1321.3 L2747.0 1327.8 L2741.5 1334.3 L2737.2 1333.3 L2738.3 1322.4 L2729.6 1321.3 L2718.7 1324.6 L2716.5 1332.2 L2710.0 1338.7 L2704.6 1345.2 L2707.8 1351.7 L2699.1 1352.8 L2688.3 1355.0 L2689.3 1350.7 L2677.4 1346.3 L2673.0 1350.7 L2657.8 1350.7 L2640.4 1350.7 L2635.0 1353.9 L2629.6 1362.6 L2620.9 1371.3 L2612.2 1382.2 L2603.5 1390.9 L2597.0 1396.3 L2597.0 1400.7 L2604.6 1401.7 L2607.8 1410.4 L2614.3 1405.0 L2623.0 1403.9 L2627.4 1410.4 L2630.7 1421.3 L2627.4 1432.2 L2625.2 1445.2 L2623.0 1458.3 L2614.3 1471.3 L2607.8 1482.2 L2601.3 1493.0 L2592.6 1503.9 L2305.7 1503.9 Z M2633.9 1410.4 L2638.3 1405.0 L2640.4 1419.1 L2642.6 1432.2 L2645.9 1445.2 L2640.4 1451.7 L2638.3 1464.8 L2640.4 1471.3 L2636.1 1475.7 L2633.9 1469.1 L2632.8 1453.9 L2635.0 1440.9 L2633.9 1427.8 L2631.3 1421.3 Z M2711.7 1438.3 L2714.8 1436.1 L2713.9 1440.9 L2711.3 1441.3 Z M2305.7 1477.8 L2607.8 1477.8 L2599.1 1490.9 L2592.6 1499.6 L2583.9 1502.8 L2577.4 1499.6 L2570.9 1503.9 L2564.3 1510.4 L2557.8 1519.1 L2553.5 1525.7 L2555.7 1532.2 L2560.0 1538.7 L2563.3 1547.4 L2562.2 1556.1 L2555.7 1561.5 L2547.0 1563.7 L2545.9 1553.9 L2547.0 1545.2 L2543.7 1538.7 L2538.3 1536.5 L2538.3 1530.0 L2533.9 1526.7 L2525.2 1528.9 L2516.5 1532.2 L2519.8 1521.3 L2515.4 1518.0 L2505.7 1526.7 L2497.0 1532.2 L2497.0 1536.5 L2503.5 1538.7 L2504.6 1544.1 L2514.3 1542.0 L2523.0 1543.0 L2518.7 1547.4 L2510.0 1551.7 L2505.7 1559.3 L2511.1 1567.0 L2513.3 1575.7 L2518.7 1582.2 L2519.8 1590.9 L2516.5 1593.0 L2519.8 1601.7 L2516.5 1610.4 L2510.0 1619.1 L2505.7 1627.8 L2499.1 1634.3 L2492.6 1639.8 L2481.7 1642.0 L2470.9 1645.2 L2462.2 1647.4 L2453.5 1649.6 L2449.1 1653.9 L2440.4 1649.6 L2433.9 1653.9 L2429.6 1660.4 L2430.7 1667.0 L2436.1 1673.5 L2442.6 1680.0 L2447.0 1688.7 L2448.0 1706.1 L2305.7 1706.1 Z M2444.8 1660.4 L2449.1 1656.1 L2455.7 1657.2 L2456.7 1661.5 L2451.3 1667.0 L2445.9 1665.9 Z M2510.0 1636.5 L2513.3 1627.8 L2517.6 1624.6 L2519.1 1630.0 L2516.5 1638.7 L2513.3 1643.0 L2510.4 1640.9 Z M2623.0 1506.1 L2625.2 1499.6 L2630.7 1498.5 L2631.7 1488.7 L2633.9 1482.2 L2638.3 1485.4 L2644.8 1490.9 L2653.5 1494.1 L2651.3 1499.6 L2642.6 1501.7 L2640.4 1507.2 L2633.9 1503.9 L2628.5 1511.5 L2624.1 1510.4 Z M2624.1 1517.0 L2629.6 1514.8 L2631.7 1523.5 L2633.9 1530.0 L2629.6 1538.7 L2628.5 1545.2 L2623.0 1551.7 L2614.3 1560.4 L2603.5 1564.8 L2599.1 1569.1 L2590.4 1567.0 L2581.7 1571.3 L2579.6 1574.6 L2579.6 1567.0 L2573.0 1567.0 L2581.7 1562.6 L2592.6 1556.1 L2603.5 1551.7 L2614.3 1545.2 L2620.9 1536.5 L2623.0 1525.7 Z M2564.3 1571.3 L2570.9 1567.0 L2577.4 1569.1 L2576.3 1575.7 L2574.1 1582.2 L2569.8 1584.3 L2567.6 1577.8 Z M2580.7 1572.4 L2586.1 1568.0 L2592.6 1567.0 L2590.4 1571.3 L2583.9 1574.6 Z M2510.0 1671.3 L2514.3 1665.9 L2520.9 1667.0 L2522.0 1673.5 L2518.7 1680.0 L2516.5 1686.5 L2520.9 1690.9 L2527.4 1693.0 L2531.7 1697.4 L2529.6 1706.1 L2514.3 1706.1 L2512.2 1695.2 L2508.9 1686.5 L2511.1 1677.8 Z"/>
<path fill="#cad2d4" d="M1163.5 1332.2 L1166.7 1324.6 L1172.2 1321.3 L1170.0 1314.8 L1175.4 1313.7 L1183.0 1319.1 L1187.4 1319.1 L1197.2 1309.3 L1200.0 1312.6 L1189.6 1320.9 L1185.2 1326.7 L1176.5 1331.1 L1167.8 1333.9 Z M1196.1 1357.2 L1198.3 1351.7 L1205.9 1348.5 L1212.4 1350.0 L1207.0 1352.8 L1200.4 1355.0 L1197.2 1358.7 Z M1241.7 1371.3 L1245.0 1366.3 L1247.8 1367.0 L1245.0 1377.8 Z M1246.1 1308.3 L1251.5 1301.3 L1252.6 1310.4 Z M1262.4 1408.3 L1267.8 1407.2 L1273.3 1419.1 L1274.8 1427.8 L1270.0 1423.5 L1264.6 1414.8 Z M1254.8 1411.5 L1257.0 1413.7 L1258.7 1419.1 Z M1304.6 1469.1 L1310.0 1462.6 L1323.0 1455.0 L1331.7 1453.9 L1340.4 1460.4 L1344.8 1469.1 L1333.9 1467.0 L1325.2 1464.8 L1316.5 1469.1 L1307.8 1471.3 Z M1327.4 1501.7 L1329.6 1486.5 L1333.9 1478.9 L1342.6 1476.7 L1340.4 1484.3 L1336.1 1490.9 L1335.0 1501.7 Z M1347.0 1476.7 L1355.7 1480.0 L1360.0 1475.7 L1368.7 1480.0 L1372.0 1485.4 L1366.5 1492.0 L1360.0 1495.2 L1355.7 1488.7 L1351.3 1484.3 Z M1262.2 1408.3 L1268.7 1408.3 L1273.0 1419.1 L1274.8 1427.8 L1268.7 1423.5 L1263.3 1414.8 Z M1454.6 1405.0 L1460.0 1402.8 L1464.3 1408.3 L1458.9 1406.5 Z M1320.4 1442.6 L1324.8 1442.0 L1325.2 1447.4 L1321.3 1447.0 Z M1372.0 1382.2 L1376.3 1381.1 L1377.0 1385.4 L1372.6 1386.1 Z M1342.6 1477.8 L1338.3 1488.7 L1336.1 1499.6 L1335.0 1508.3 L1329.6 1510.4 L1326.3 1499.6 L1329.6 1488.7 L1336.1 1477.8 Z M1364.3 1477.8 L1362.2 1484.3 L1358.9 1488.7 L1355.7 1495.2 L1351.3 1490.9 L1349.1 1477.8 Z M1355.7 1506.1 L1364.3 1501.7 L1375.2 1496.3 L1378.5 1497.4 L1373.0 1501.7 L1362.2 1505.0 L1353.5 1508.3 Z M1378.5 1494.1 L1390.4 1492.0 L1391.5 1495.2 L1381.7 1497.4 Z M1898.0 1355.0 L1903.5 1350.7 L1906.1 1353.9 L1901.3 1359.3 Z M1998.0 1332.2 L2001.3 1324.6 L2007.8 1324.6 L2013.3 1332.2 L2012.2 1338.7 L2005.7 1343.0 L2001.3 1338.7 Z M2023.0 1319.1 L2029.6 1318.0 L2033.5 1326.7 L2030.7 1332.2 L2026.3 1325.7 Z M2041.5 1359.3 L2044.8 1357.2 L2048.0 1361.5 L2044.3 1363.7 Z M2025.2 1286.5 L2042.6 1286.5 L2042.6 1295.2 L2033.9 1296.3 L2028.5 1292.0 Z M2244.8 1480.0 L2249.1 1473.5 L2254.6 1471.3 L2249.1 1478.9 Z M1930.7 1369.1 L1933.9 1367.0 L1932.8 1373.5 L1930.7 1374.6 Z M1747.0 1471.3 L1819.8 1471.3 L1822.0 1488.7 L1818.7 1498.5 L1803.5 1497.4 L1786.1 1498.5 L1775.2 1501.7 L1773.5 1510.4 L1774.8 1523.5 L1773.0 1532.2 L1776.3 1543.0 L1783.9 1545.2 L1790.4 1549.6 L1794.3 1553.9 L1790.4 1560.4 L1786.1 1569.1 L1779.6 1575.7 L1770.9 1588.7 L1768.7 1595.2 L1762.2 1601.7 L1747.0 1605.0 Z M1795.9 1551.5 L1801.3 1547.3 L1813.8 1547.3 L1821.2 1540.9 L1823.5 1535.8 L1827.5 1532.2 L1824.6 1527.0 L1826.3 1523.3 L1830.9 1518.1 L1838.3 1513.6 L1844.6 1505.9 L1844.0 1499.8 L1849.1 1497.4 L1856.5 1498.2 L1861.1 1499.8 L1866.7 1495.8 L1874.7 1490.3 L1877.2 1489.4 L1882.4 1492.3 L1884.9 1496.2 L1886.4 1501.3 L1890.1 1505.2 L1895.8 1509.0 L1903.7 1514.0 L1906.6 1517.1 L1911.7 1521.1 L1915.7 1524.1 L1917.9 1530.7 L1915.4 1536.5 L1917.7 1538.7 L1923.6 1531.4 L1923.1 1527.0 L1920.8 1522.6 L1924.2 1520.0 L1928.8 1523.3 L1930.9 1524.8 L1931.6 1522.2 L1928.5 1518.5 L1922.5 1515.1 L1918.2 1509.0 L1912.3 1508.6 L1907.1 1504.8 L1903.2 1495.8 L1898.0 1492.3 L1896.3 1486.3 L1896.6 1481.5 L1904.3 1479.0 L1903.7 1483.9 L1905.4 1486.3 L1908.3 1482.3 L1912.8 1491.9 L1919.6 1496.6 L1929.3 1503.3 L1936.7 1509.0 L1937.3 1513.6 L1936.7 1520.4 L1940.1 1525.6 L1943.0 1529.2 L1947.5 1535.1 L1947.5 1538.7 L1949.8 1546.6 L1954.4 1549.4 L1958.3 1549.0 L1957.8 1543.0 L1956.6 1541.6 L1960.0 1542.3 L1962.9 1540.5 L1963.2 1535.8 L1958.3 1530.7 L1956.6 1526.3 L1956.6 1519.6 L1960.0 1521.8 L1962.3 1523.7 L1964.6 1518.1 L1965.2 1516.6 L1973.7 1517.0 L1974.8 1518.9 L1975.4 1523.0 L1979.4 1527.0 L1976.5 1535.1 L1981.1 1538.0 L1982.2 1545.1 L1986.8 1547.3 L1994.2 1550.8 L1999.3 1550.1 L2001.0 1545.9 L2007.8 1548.0 L2012.9 1551.5 L2019.2 1550.8 L2023.2 1546.6 L2028.9 1548.0 L2031.7 1545.9 L2030.6 1552.2 L2030.0 1555.7 L2030.6 1562.7 L2028.3 1566.8 L2025.5 1574.3 L2022.1 1583.0 L2018.6 1585.7 L2010.1 1585.0 L2002.7 1583.0 L1996.5 1585.0 L1990.8 1587.0 L1981.1 1583.7 L1969.1 1582.4 L1962.9 1579.7 L1951.5 1573.6 L1940.1 1579.0 L1940.1 1587.7 L1935.6 1591.0 L1920.8 1585.0 L1912.3 1577.0 L1901.4 1573.6 L1891.8 1571.6 L1883.8 1566.8 L1887.8 1561.3 L1887.2 1553.6 L1888.4 1548.7 L1888.9 1544.4 L1882.7 1543.0 L1871.9 1545.9 L1863.3 1545.1 L1854.8 1546.6 L1843.4 1546.6 L1826.3 1552.2 L1817.8 1557.1 L1809.3 1557.8 L1795.6 1553.6 Z M1991.9 1514.3 L1986.2 1511.3 L1982.8 1504.4 L1985.4 1499.0 L1989.1 1494.3 L1989.6 1491.1 L1995.3 1483.1 L1999.3 1476.6 L2001.3 1472.5 L2005.6 1471.7 L2009.0 1472.1 L2010.1 1475.8 L2014.1 1475.8 L2014.1 1478.2 L2011.2 1481.9 L2016.9 1484.7 L2016.6 1487.9 L2018.4 1489.5 L2020.9 1489.5 L2026.0 1486.3 L2027.7 1484.3 L2033.4 1484.7 L2035.7 1483.9 L2038.5 1485.5 L2042.0 1487.9 L2048.2 1491.9 L2052.8 1496.6 L2059.6 1500.5 L2063.3 1507.5 L2063.0 1511.3 L2059.0 1514.3 L2053.9 1515.8 L2052.2 1515.5 L2044.8 1516.6 L2036.8 1515.1 L2032.9 1513.6 L2030.6 1510.5 L2026.0 1507.9 L2015.8 1508.6 L2008.4 1512.1 L2002.7 1515.1 L1998.2 1514.7 Z M2034.6 1481.1 L2028.3 1482.3 L2024.3 1475.8 L2024.3 1475.0 L2035.7 1470.4 L2039.7 1467.5 L2047.7 1466.7 L2049.9 1466.7 L2044.2 1470.8 L2043.1 1476.6 L2039.1 1482.3 L2036.3 1481.9 Z M1978.2 1520.4 L1982.8 1515.8 L1990.8 1515.8 L1996.5 1517.7 L1991.3 1520.4 L1984.5 1520.4 Z M2097.7 1479.0 L2106.2 1474.1 L2110.8 1470.8 L2119.3 1468.3 L2127.9 1470.0 L2129.0 1475.0 L2129.0 1481.5 L2123.9 1483.1 L2118.2 1481.5 L2112.5 1487.9 L2117.3 1495.5 L2123.9 1502.1 L2125.6 1509.8 L2127.3 1512.1 L2133.6 1510.5 L2137.0 1513.6 L2133.0 1516.6 L2127.3 1515.8 L2127.9 1523.3 L2131.3 1528.5 L2132.7 1534.3 L2133.0 1542.3 L2133.6 1545.9 L2127.9 1548.0 L2122.2 1547.3 L2114.2 1545.9 L2111.9 1542.3 L2107.4 1541.6 L2104.5 1535.1 L2106.8 1528.5 L2108.5 1521.1 L2113.1 1520.4 L2108.5 1518.9 L2104.5 1512.1 L2101.1 1507.9 L2096.6 1500.7 L2096.6 1494.3 L2092.6 1488.7 L2093.7 1484.7 Z M2011.5 1593.3 L2014.7 1600.1 L2021.2 1607.6 L2023.2 1602.1 L2025.5 1596.2 L2025.5 1606.0 L2030.0 1612.4 L2034.0 1617.5 L2042.5 1630.7 L2049.1 1646.7 L2060.2 1661.3 L2068.4 1674.4 L2070.4 1685.7 L2072.4 1695.6 L2073.5 1699.7 L2079.5 1709.0 L2079.5 1717.7 L2065.3 1717.7 L2071.0 1706.1 L2072.4 1700.6 L2069.3 1697.4 L2058.5 1686.9 L2050.8 1682.1 L2045.4 1667.9 L2038.0 1658.3 L2036.3 1643.7 L2028.3 1631.9 L2021.5 1618.1 L2018.6 1610.8 L2013.5 1602.7 Z M2104.5 1593.0 L2108.5 1593.6 L2115.4 1600.1 L2119.3 1607.3 L2130.7 1614.3 L2138.7 1614.9 L2146.6 1611.7 L2151.2 1615.6 L2155.2 1620.9 L2171.1 1623.2 L2180.8 1624.4 L2193.3 1622.5 L2204.1 1623.2 L2207.5 1626.0 L2209.8 1631.9 L2214.3 1633.2 L2216.6 1638.1 L2226.3 1638.1 L2218.9 1641.2 L2222.3 1646.1 L2226.9 1650.4 L2230.3 1651.6 L2236.5 1649.2 L2238.2 1641.8 L2239.9 1649.2 L2239.9 1655.8 L2240.5 1661.9 L2243.4 1673.8 L2246.2 1682.7 L2251.9 1698.0 L2259.9 1714.8 L2267.2 1726.3 L2110.8 1726.3 L2118.2 1709.0 L2117.6 1704.4 L2105.1 1707.3 L2082.4 1712.5 L2072.7 1706.7 L2073.5 1699.7 L2082.4 1698.6 L2093.7 1695.1 L2105.7 1688.6 L2116.5 1683.9 L2123.3 1676.2 L2134.1 1673.8 L2146.6 1668.5 L2154.6 1658.3 L2159.2 1652.8 L2163.7 1646.7 L2166.6 1640.6 L2159.7 1633.8 L2151.2 1631.3 L2147.2 1625.0 L2147.2 1617.5 L2144.6 1620.0 L2141.0 1623.2 L2135.8 1628.2 L2125.0 1630.7 L2119.3 1627.5 L2119.9 1623.2 L2117.9 1617.8 L2115.4 1621.3 L2115.1 1625.0 L2111.9 1621.3 L2111.4 1616.2 L2109.1 1612.4 L2104.0 1606.0 L2100.0 1598.8 L2099.4 1595.6 Z M2267.8 1726.3 L2275.8 1719.4 L2280.9 1713.1 L2283.2 1696.8 L2282.0 1682.7 L2287.7 1680.4 L2294.6 1674.1 L2300.2 1669.7 L2309.9 1660.1 L2314.8 1657.0 L2321.3 1651.6 L2323.0 1646.7 L2328.7 1646.1 L2334.9 1644.3 L2342.3 1644.3 L2345.8 1640.0 L2348.6 1641.8 L2349.7 1647.3 L2354.9 1654.9 L2363.4 1667.9 L2362.8 1679.8 L2369.6 1681.0 L2374.2 1676.8 L2378.2 1673.8 L2381.6 1676.8 L2384.4 1691.6 L2387.3 1700.9 L2386.7 1714.8 L2385.6 1726.3 Z M2418.7 1427.8 L2423.0 1425.7 L2431.7 1419.1 L2440.4 1408.3 L2445.9 1397.4 L2449.1 1388.7 L2451.7 1388.7 L2450.2 1399.6 L2445.9 1412.6 L2438.3 1419.1 L2428.5 1426.7 L2423.0 1430.0 Z"/>
<path fill="#f2f2f0" d="M1897.5 1538.0 L1902.3 1536.9 L1908.8 1538.0 L1915.1 1536.2 L1912.3 1541.6 L1913.4 1544.8 L1912.3 1547.3 L1907.1 1544.8 L1903.2 1543.0 L1897.2 1539.4 Z M1878.7 1514.3 L1881.5 1516.6 L1881.5 1523.3 L1881.0 1529.2 L1877.0 1531.4 L1874.1 1529.2 L1874.4 1523.3 L1873.0 1518.9 L1873.0 1516.2 Z M1879.8 1500.5 L1880.4 1503.6 L1879.8 1509.0 L1878.7 1512.8 L1875.3 1509.0 L1875.8 1503.6 L1879.3 1502.9 Z M1960.6 1555.7 L1964.0 1555.0 L1968.6 1557.1 L1976.0 1557.1 L1974.8 1559.2 L1967.4 1559.2 L1960.6 1557.8 Z M2010.1 1558.5 L2013.5 1556.4 L2017.5 1556.8 L2022.9 1554.3 L2019.2 1558.5 L2014.1 1562.0 L2010.7 1561.3 Z M1844.0 1524.1 L1846.0 1525.6 L1843.7 1528.5 L1840.0 1526.7 Z M1958.9 1531.4 L1963.5 1533.6 L1965.7 1537.2 L1962.3 1535.8 Z"/>
<path fill="none" stroke="#cdcfce" stroke-width="1.1" stroke-linejoin="round" d="M1024.3 1286.5 L1024.3 1339.8 L1030.9 1340.4 L1034.1 1339.1 L1035.7 1343.0 L1043.9 1355.0 L1050.4 1347.4 L1055.9 1345.7 L1063.5 1356.1 L1070.0 1367.0 L1076.5 1380.0 L1087.4 1386.5 L1087.4 1395.2 L1084.8 1399.1 M1126.5 1451.7 L1285.2 1451.7 M1161.3 1575.7 L1173.3 1575.7 L1211.3 1585.4 L1211.3 1581.7 L1221.1 1581.7 L1230.9 1593.0 L1239.6 1600.0 L1246.1 1594.1 L1251.5 1595.2 L1259.1 1606.1 L1263.5 1617.0 L1273.3 1620.2 L1285.2 1622.4 M1255.7 1451.7 L1285.0 1451.7 L1286.5 1448.5 L1288.3 1453.9 L1299.1 1456.5 L1310.0 1459.3 L1323.0 1458.3 L1331.7 1463.7 L1342.6 1469.1 L1347.0 1476.7 L1355.7 1483.3 L1358.9 1497.4 L1360.0 1503.9 M1375.2 1497.4 L1390.4 1495.2 L1399.1 1485.4 L1419.8 1484.3 L1427.4 1475.7 L1431.7 1465.9 L1439.3 1467.0 L1440.4 1480.0 L1444.8 1485.4 M1255.7 1607.2 L1262.2 1617.0 L1272.0 1620.2 M1777.4 1608.3 L1777.4 1619.1 L1760.0 1619.1 L1757.8 1632.2 L1752.4 1640.9 L1751.3 1648.5 L1729.6 1648.5 M1777.4 1610.4 L1825.2 1639.8 M1790.4 1625.7 L1795.9 1683.3 L1779.6 1683.3 L1773.0 1677.8 L1738.3 1676.7 L1731.7 1678.9 M1301.3 1682.2 L1307.8 1675.7 L1314.3 1677.8 L1312.2 1671.3 L1318.7 1670.2 L1325.2 1669.1 M1894.8 1286.5 L1895.2 1301.7 L1893.7 1345.2 L1891.5 1355.0 M1997.0 1286.5 L2005.7 1308.3 L1994.8 1325.7 L1983.9 1337.0 M1986.1 1349.6 L1981.7 1358.3 L1985.0 1371.3 L1983.9 1382.2 L1986.1 1386.5 L2001.3 1388.7 L2003.5 1401.7 L2005.7 1419.1 L2018.7 1422.4 L2023.0 1432.2 L2038.3 1440.9 L2054.6 1447.4 L2051.3 1460.4 L2042.6 1469.1 M1947.0 1382.2 L1964.3 1382.2 L1977.4 1388.7 L1970.9 1401.7 L1955.7 1401.7 L1940.4 1400.7 M1962.2 1421.3 L1977.4 1427.8 L1999.1 1430.0 L2005.7 1419.1 M1907.8 1406.1 L1910.0 1432.2 L1894.8 1440.9 L1899.1 1453.9 L1920.9 1453.9 L1933.9 1447.4 L1955.7 1449.6 L1963.3 1432.2 L1960.0 1421.3 M2094.8 1438.7 L2103.5 1440.9 L2116.5 1427.8 L2129.6 1430.0 L2138.3 1436.5 L2151.3 1432.2 L2164.3 1437.6 L2176.3 1434.3 L2168.7 1423.5 L2175.2 1406.1 L2197.0 1399.6 L2218.7 1392.0 L2229.6 1395.2 L2233.9 1403.9 L2247.0 1410.4 L2264.3 1401.7 L2281.7 1435.4 L2299.1 1434.3 L2320.0 1447.4 M2094.8 1438.7 L2091.5 1453.9 L2099.1 1462.6 L2105.7 1473.5 M1862.2 1414.8 L1864.3 1432.2 L1860.0 1445.2 L1873.0 1453.9 L1868.7 1469.1 L1881.7 1464.8 L1894.8 1464.8 L1903.5 1453.9 M1874.1 1546.3 L1868.7 1567.0 L1877.4 1575.7 L1881.7 1588.7 L1879.6 1619.1 L1894.8 1635.4 L1907.8 1639.8 L1916.5 1635.4 L1962.2 1658.3 L1968.7 1656.1 L1968.7 1584.3 M1968.7 1644.1 L2005.7 1644.1 L2033.9 1644.1 M1777.4 1610.4 L1847.0 1661.5 L1894.8 1635.4 M1789.3 1625.7 L1794.8 1683.3 L1760.0 1684.3 M1847.0 1661.5 L1851.3 1671.3 L1844.8 1684.3 L1827.4 1686.5 L1803.5 1697.4 M1912.2 1637.6 L1916.5 1653.9 L1912.2 1675.7 L1903.5 1693.0 L1907.8 1702.0 M1962.2 1658.3 L1962.2 1684.3 L1955.7 1684.3 L1951.3 1702.0 M2031.7 1549.6 L2049.1 1545.2 L2068.7 1543.0 L2079.6 1532.2 L2077.4 1523.5 L2086.1 1519.1 M2062.2 1545.2 L2060.0 1567.0 L2049.1 1573.5 L2031.7 1577.8 M2049.1 1573.5 L2049.1 1580.0 L2073.0 1595.2 L2090.4 1599.6 L2100.2 1595.2 M2079.6 1532.2 L2088.3 1553.9 L2086.1 1567.0 L2094.8 1575.7 L2099.1 1588.7 L2101.3 1595.2 M2133.9 1545.2 L2147.0 1538.7 L2168.7 1545.2 L2175.2 1558.3 L2173.0 1575.7 L2177.4 1597.4 L2183.9 1610.4 L2177.4 1623.5 M2175.2 1558.3 L2194.8 1551.7 L2205.7 1543.0 L2225.2 1540.9 L2238.3 1547.4 L2255.7 1543.0 M2177.4 1597.4 L2194.8 1597.4 L2212.2 1588.7 L2216.5 1575.7 L2231.7 1569.1 L2236.1 1551.7 M2144.8 1484.3 L2157.8 1480.0 L2173.0 1488.7 L2186.1 1497.4 L2203.5 1499.6 L2216.5 1512.6 L2238.3 1506.1 L2251.3 1499.6 L2281.7 1493.0 L2286.1 1480.0 M2255.7 1543.0 L2260.0 1558.3 L2247.0 1567.0 L2255.7 1577.8 L2244.8 1588.7 L2227.4 1610.4 L2220.9 1619.1 L2218.7 1636.5 M2255.7 1543.0 L2277.4 1553.9 L2281.7 1567.0 L2277.4 1575.7 L2286.1 1593.0 L2307.8 1603.9 L2325.2 1610.4 M2310.0 1447.4 L2323.0 1449.6 L2336.1 1443.0 L2351.3 1435.4 L2364.3 1442.0 L2381.7 1444.1 L2385.0 1432.2 L2389.3 1423.5 L2405.7 1430.0 L2410.0 1438.7 L2423.0 1440.9 L2440.4 1444.1 L2457.8 1449.6 L2477.4 1440.9 L2494.8 1447.4 L2505.7 1440.9 L2508.9 1427.8 L2512.2 1414.8 L2527.4 1410.4 L2540.4 1415.9 L2547.0 1430.0 L2551.3 1443.0 L2568.7 1453.9 L2573.0 1462.6 L2592.6 1458.3 L2588.3 1475.7 L2581.7 1484.3 L2570.9 1486.5 L2573.0 1500.0 M2323.0 1449.6 L2338.3 1464.8 L2344.8 1482.2 L2364.3 1488.7 L2375.2 1500.0 M2494.8 1447.4 L2483.9 1461.5 L2494.8 1463.7 L2501.3 1460.4 L2508.9 1471.3 L2490.4 1473.5 L2477.4 1484.3 L2462.2 1486.5 L2457.8 1500.0 M2342.6 1480.0 L2364.3 1490.9 L2375.2 1502.8 L2401.3 1503.9 L2423.0 1512.2 L2453.5 1502.8 L2462.2 1495.2 L2460.0 1488.7 L2483.9 1480.0 M2573.0 1480.0 L2570.9 1493.0 L2565.4 1502.8 L2555.7 1509.3 L2544.8 1512.6 L2533.9 1525.7 M2538.3 1536.5 L2549.1 1537.6 L2554.6 1533.3 M2310.0 1603.9 L2327.4 1608.3 L2331.7 1614.8 L2351.3 1612.6 L2368.7 1598.5 L2381.7 1603.9 L2386.1 1610.4 L2381.7 1627.8 L2390.4 1636.5 L2392.6 1647.4 L2405.7 1642.0 L2425.2 1636.5 L2433.9 1642.0 L2440.4 1649.6 M2327.4 1617.0 L2333.9 1632.2 L2331.7 1647.4 M2351.3 1632.2 L2344.8 1642.0 M2392.6 1647.4 L2381.7 1660.4 L2383.9 1671.3 L2392.6 1686.5 L2390.4 1702.0 M2405.7 1642.0 L2401.3 1653.9 L2412.2 1664.8 L2423.0 1660.4 L2431.7 1675.7 L2440.4 1688.7"/>
</svg>
<div class="t ml" style="left:458.0px;top:93.3px;font-size:20.64px;transform:scaleX(0.886)">Canada</div>
<div class="t ml" style="left:506.0px;top:218.5px;font-size:20.64px;transform:scaleX(0.962)">United</div>
<div class="t ml" style="left:507.3px;top:242.7px;font-size:20.64px;transform:scaleX(0.936)">States</div>
<div class="t ml" style="left:478.0px;top:334.6px;font-size:20.64px;transform:scaleX(0.934)">Mexico</div>
<div class="t ml" style="left:618.7px;top:346.2px;font-size:20.64px;transform:scaleX(0.886)">Cuba</div>
<div class="t ml" style="left:1108.2px;top:31.6px;font-size:20.64px;transform:scaleX(0.940)">Norway</div>
<div class="t ml" style="left:1049.2px;top:94.0px;font-size:20.64px;transform:scaleX(0.973)">United</div>
<div class="t ml" style="left:1039.1px;top:117.9px;font-size:20.64px;transform:scaleX(0.950)">Kingdom</div>
<div class="t ml" style="left:1217.5px;top:112.5px;font-size:20.64px;transform:scaleX(0.962)">Belarus</div>
<div class="t ml" style="left:1234.9px;top:151.2px;font-size:20.64px;transform:scaleX(0.979)">Ukraine</div>
<div class="t ml" style="left:1076.2px;top:163.5px;font-size:20.64px;transform:scaleX(0.943)">France</div>
<div class="t ml" style="left:1424.1px;top:161.4px;font-size:20.64px;transform:scaleX(0.933)">Kazakhstan</div>
<div class="t ml" style="left:1044.1px;top:215.7px;font-size:20.64px;transform:scaleX(0.938)">Spain</div>
<div class="t ml" style="left:1143.8px;top:207.0px;font-size:20.64px;transform:scaleX(0.997)">Italy</div>
<div class="t ml" style="left:1262.6px;top:232.5px;font-size:20.64px;transform:scaleX(0.929)">Turkey</div>
<div class="t ml" style="left:1402.2px;top:212.9px;font-size:20.64px;transform:scaleX(0.949)">Uzbekistan</div>
<div class="t ml" style="left:1020.8px;top:279.4px;font-size:20.64px;transform:scaleX(0.928)">Morocco</div>
<div class="t ml" style="left:1319.8px;top:275.1px;font-size:20.64px;transform:scaleX(1.008)">Iraq</div>
<div class="t ml" style="left:1382.1px;top:277.7px;font-size:20.64px;transform:scaleX(1.030)">Iran</div>
<div class="t ml" style="left:1236.4px;top:317.9px;font-size:20.64px;transform:scaleX(0.919)">Egypt</div>
<div class="t ml" style="left:1320.8px;top:320.7px;font-size:20.64px;transform:scaleX(0.927)">Saudi</div>
<div class="t ml" style="left:1317.4px;top:344.6px;font-size:20.64px;transform:scaleX(0.929)">Arabia</div>
<div class="t ml" style="left:1516.2px;top:345.1px;font-size:20.64px;transform:scaleX(0.950)">India</div>
<div class="t ml" style="left:1065.7px;top:373.8px;font-size:20.64px;transform:scaleX(1.001)">Mali</div>
<div class="t ml" style="left:1235.0px;top:394.6px;font-size:20.64px;transform:scaleX(0.927)">Sudan</div>
<div class="t ml" style="left:972.4px;top:386.4px;font-size:20.64px;transform:scaleX(0.926)">Senegal</div>
<div class="t ml" style="left:1612.6px;top:22.2px;font-size:20.64px;transform:scaleX(0.904)">Russia</div>
<div class="t ml" style="left:1638.6px;top:172.2px;font-size:20.64px;transform:scaleX(0.932)">Mongolia</div>
<div class="t ml" style="left:1646.9px;top:258.1px;font-size:20.64px;transform:scaleX(0.893)">China</div>
<div class="t ml" style="left:1854.7px;top:251.6px;font-size:20.64px;transform:scaleX(0.933)">Japan</div>
<div class="t ml" style="left:1630.0px;top:387.5px;font-size:20.64px;transform:scaleX(0.928)">Thailand</div>
<div class="t ml" style="left:1741.8px;top:407.1px;font-size:20.64px;transform:scaleX(0.982)">Philippines</div>
<div class="t ml" style="left:1157.8px;top:-15.3px;font-size:20.64px;transform:scaleX(0.931)">Sweden</div>
<div class="t ml" style="left:952.6px;top:-15.1px;font-size:20.64px;transform:scaleX(0.987)">Iceland</div>
<div class="t mo" style="left:123.3px;top:208.3px;font-size:28.05px;letter-spacing:9.95px;transform:scaleX(0.88)">North</div>
<div class="t mo" style="left:111.4px;top:250.7px;font-size:28.05px;letter-spacing:8.66px;transform:scaleX(0.88)">Pacific</div>
<div class="t mo" style="left:119.6px;top:292.7px;font-size:28.05px;letter-spacing:8.13px;transform:scaleX(0.88)">Ocean</div>
<div class="t mo" style="left:837.2px;top:175.7px;font-size:28.05px;letter-spacing:9.64px;transform:scaleX(0.88)">North</div>
<div class="t mo" style="left:817.5px;top:217.5px;font-size:28.05px;letter-spacing:8.59px;transform:scaleX(0.88)">Atlantic</div>
<div class="t mo" style="left:833.5px;top:259.4px;font-size:28.05px;letter-spacing:8.45px;transform:scaleX(0.88)">Ocean</div></div>
<div class="a" style="left:202px;top:1622px;width:3156px;height:80px;background:linear-gradient(to bottom,rgba(0,0,0,0) 0%,rgba(0,0,0,.02) 50%,rgba(0,0,0,.065) 100%)"></div>
<div class="a" style="left:3346px;top:1690px;width:12px;height:12px;background:radial-gradient(circle at 0 0,rgba(0,0,0,0) 10.5px,#222 11.5px)"></div>
</div>
</body>
</html>
